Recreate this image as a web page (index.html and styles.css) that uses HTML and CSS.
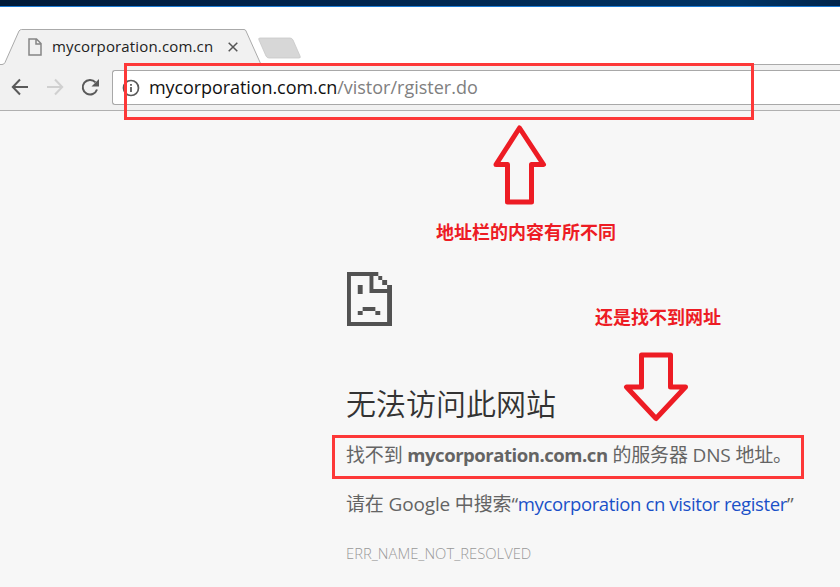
FILE: index.html
```html
<!DOCTYPE html>
<html lang="zh-CN">
<head>
<meta charset="utf-8">
<title>mycorporation.com.cn</title>
<link rel="stylesheet" href="styles.css">
</head>
<body>
<header class="browser">
  <div class="desktop-edge"></div>
  <div class="tab-strip">
    <div class="tab">
      <svg class="tab-shape" width="262" height="36" viewBox="0 0 262 36"><path d="M0 35.500H2Q4 35.500 5 33.500L19 2Q20 .5 21.500 .5H244Q245.500 .5 246 2L260 33.500L261 36H0Z" fill="#f1f1f1"/><path d="M0 35.500H2Q4 35.500 5 33.500L19 2Q20 .5 21.500 .5H244Q245.500 .5 246 2L261 35.500" fill="none" stroke="#aaa"/></svg>
      <svg class="page-icon" width="14" height="18" viewBox="0 0 14 18"><path d="M1 1H8.500L13 5.500V17H1ZM8 1V6H13" fill="none" stroke="#858585" stroke-width="1.500"/></svg>
      <span class="tab-title">mycorporation.com.cn</span>
      <svg class="close" width="10" height="10" viewBox="0 0 10 10"><path d="M.7 .7L9.300 9.300M9.300 .7L.7 9.300" stroke="#555" stroke-width="1.500"/></svg>
    </div>
    <svg class="new-tab" width="44" height="22" viewBox="0 0 44 22"><path d="M2 1H32Q34 1 35 3L42 19Q43 21 41 21H11Q9 21 8 19L1 3Q0 1 2 1Z" fill="#d7d7d7" stroke="#c8c8c8" stroke-width=".8"/></svg>
  </div>
  <div class="toolbar">
    <svg class="nav" width="112" height="45" viewBox="0 0 112 45"><g fill="none" stroke-width="2"><path d="M28 22H13M20 14.500L12.800 22L20 29.500" stroke="#5a5a5a"/><path d="M47 22H62M55 14.500L62.200 22L55 29.500" stroke="#d0d0d0"/><path d="M95.500 17.300A7.300 7.300 0 1 0 97 24.500" stroke="#5a5a5a"/></g><path d="M99 14V21.500H91.500Z" fill="#5a5a5a"/></svg>
    <div class="omnibox">
      <svg class="info" width="18" height="18" viewBox="0 0 18 18"><circle cx="9" cy="9" r="7.500" fill="none" stroke="#5a5a5a" stroke-width="1.700"/><path d="M9 5V6.800M9 8V13" stroke="#5a5a5a" stroke-width="1.800"/></svg>
      <span class="host">mycorporation.com.cn</span><span class="path">/vistor/rgister.do</span>
    </div>
  </div>
</header>
<main class="error-page">
  <svg class="sad" width="45" height="54" viewBox="0 0 46 54" preserveAspectRatio="none"><g fill="#525252"><path d="M0 0H32V4H4V50H41V21H23V4H27V17H41V13H46V54H0Z"/><path d="M32 4H36V8H32ZM36 8H41V13H36ZM11 13H16V22H11ZM16 35H29V39H16ZM11 39H16V43H11ZM29 39H34V43H29Z"/></g></svg>
  <h1>无法访问此网站</h1>
  <p class="reason">找不到 <strong>mycorporation.com.cn</strong> 的服务器 DNS 地址。</p>
  <p class="suggest">请在 Google 中搜索“<a>mycorporation cn visitor register</a>”</p>
  <p class="code">ERR_NAME_NOT_RESOLVED</p>
</main>
<div class="mark mark-url"></div>
<div class="mark mark-reason"></div>
<svg class="arrow arrow-up" width="54" height="82" viewBox="0 0 54 82"><path d="M26.500 4L50.500 40.500H38.500V78H14.500V40.500H3Z" fill="none" stroke="#ed1c24" stroke-width="5" stroke-linejoin="round"/></svg>
<svg class="arrow arrow-down" width="66" height="72" viewBox="0 0 66 72"><path d="M18.500 4H47.500V36H62.500L33 67.500L3.500 36H18.500Z" fill="none" stroke="#ed1c24" stroke-width="5" stroke-linejoin="round"/></svg>
<div class="note note-url">地址栏的内容有所不同</div>
<div class="note note-reason">还是找不到网址</div>
</body>
</html>
```
FILE: styles.css
```css
* { box-sizing: border-box; }
body {
  margin: 0;
  width: 840px;
  height: 587px;
  overflow: hidden;
  position: relative;
  background: #f7f7f7;
  font-family: "Open Sans", "Noto Sans CJK SC", sans-serif;
  color: #646464;
}
svg { display: block; flex: none; }
.desktop-edge {
  height: 7px;
  background: linear-gradient(90deg, #001a38, #00224a 30%, #002a55 60%, #003466 88%, #00244a);
  border-bottom: 1px solid #1c7bd4;
}
.tab-strip {
  height: 58px;
  padding-top: 22px;
  display: flex;
  background: linear-gradient(#aaa, #aaa) bottom / 100% 1px no-repeat #fff;
}
.tab {
  position: relative;
  width: 258px;
  height: 36px;
  display: flex;
  align-items: center;
  padding-left: 28px;
}
.tab-shape { position: absolute; left: 0; top: 0; }
.page-icon, .tab-title, .close { position: relative; }
.tab-title {
  width: 176px;
  margin-left: 10px;
  padding-bottom: 2px;
  font-size: 15px;
  letter-spacing: .16px;
  line-height: 34px;
  color: #222;
  white-space: nowrap;
}
.new-tab { margin-top: 8px; }
.toolbar {
  height: 46px;
  display: flex;
  background: #f1f1f1;
  border-bottom: 1px solid #b0b0b0;
}
.omnibox {
  flex: 1;
  height: 35px;
  margin-top: 5px;
  padding-left: 9px;
  display: flex;
  align-items: center;
  background: #fff;
  border: 1px solid #a8a8a8;
  border-right: 0;
  border-radius: 3px 0 0 3px;
  font-size: 18px;
  line-height: 33px;
  white-space: nowrap;
}
.host { margin-left: 9px; letter-spacing: -.08px; color: #111; }
.path { color: #808080; }
.error-page { padding: 161px 0 0 347px; white-space: nowrap; }
h1 {
  margin: 55px 0 0 -1px;
  font-size: 30px;
  font-weight: 350;
  line-height: 46px;
  color: #333;
}
p { margin: 0 0 0 -1px; font-size: 19px; line-height: 30px; letter-spacing: -.15px; }
.reason { margin-top: 13px; }
.suggest { margin-top: 19px; }
.reason strong { font-size: 18.5px; letter-spacing: -.46px; }
.suggest a { color: #1a50c8; font-size: 18.5px; letter-spacing: -.37px; }
.code { margin-top: 22px; font-size: 14.8px; line-height: 24px; letter-spacing: 0; font-weight: 300; color: #999; }
.mark { position: absolute; border: 3px solid #fd3838; }
.mark-url { left: 124px; top: 63px; width: 630px; height: 57px; }
.mark-reason { left: 332px; top: 435px; width: 472px; height: 44px; }
.arrow { position: absolute; }
.arrow-up { left: 493px; top: 124px; }
.arrow-down { left: 623px; top: 351px; }
.note {
  position: absolute;
  font-size: 18px;
  line-height: 26px;
  font-weight: 700;
  color: #ed1c24;
  white-space: nowrap;
}
.note-url { left: 436px; top: 219px; }
.note-reason { left: 595px; top: 304px; }
```
